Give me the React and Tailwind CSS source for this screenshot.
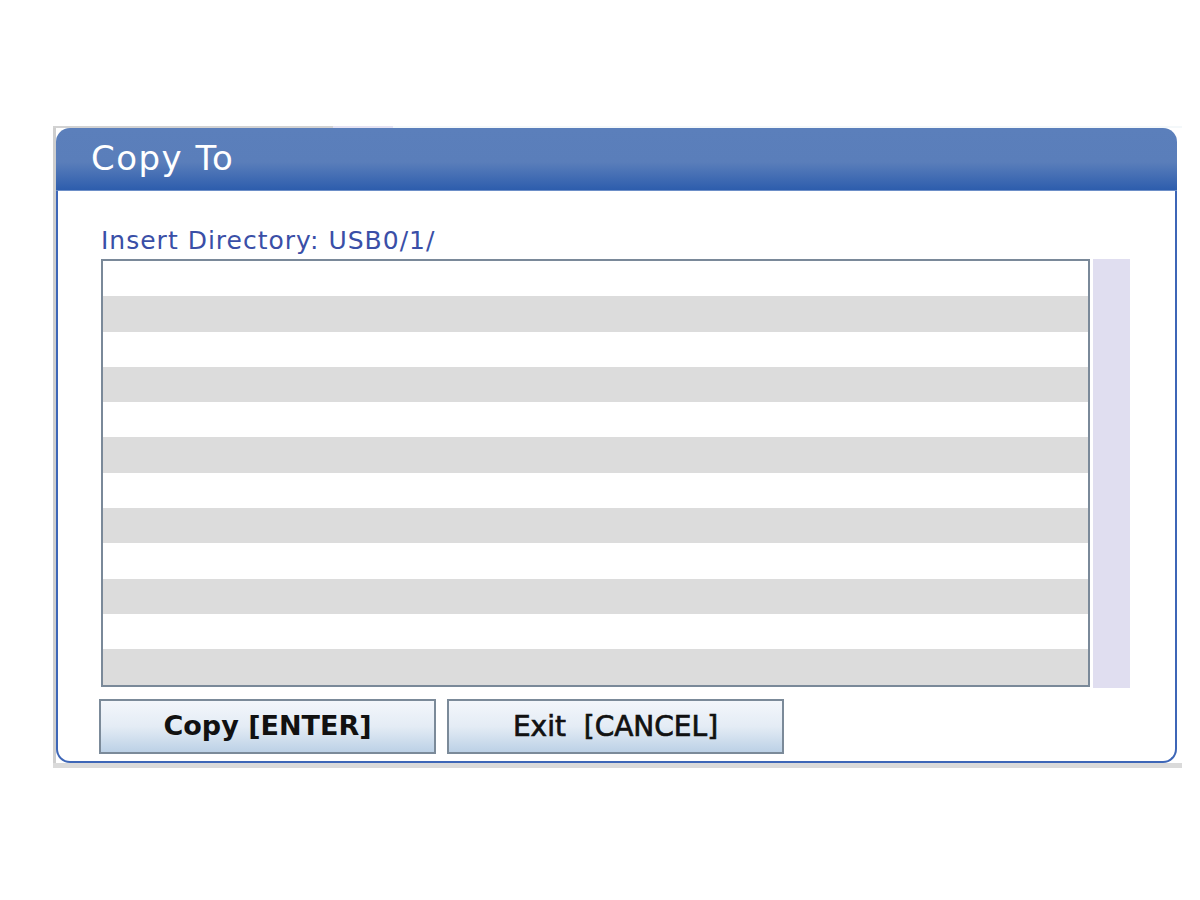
const rows = Array.from({ length: 12 }, (_, i) => i);

function DialogButton({ children }) {
  return (
    <button className="w-[337px] h-[55px] border-2 border-[#7b8a99] bg-gradient-to-b from-[#f3f6fb] via-[#e4ecf5] to-[#bcd1e6] text-[#111] whitespace-pre flex items-center justify-center">
      {children}
    </button>
  );
}

export default function App() {
  return (
    <div className="min-h-[900px] bg-white pt-[126px] pl-[53px]" style={{ fontFamily: '"DejaVu Sans", Verdana, sans-serif' }}>
      <div className="w-[1129px] bg-white">
        {/* edge of the screen behind the dialog */}
        <div className="flex h-[2px]">
          <div className="w-[280px] bg-[#d2d2d2]" />
          <div className="w-[60px] bg-[#e4e2f2]" />
          <div className="flex-1 bg-[#f4f8fa]" />
        </div>
        <div className="border-l-[3px] border-[#cecece]">
          <div className="w-[1121px]">
            {/* title bar */}
            <div className="h-[63px] rounded-t-[14px] bg-gradient-to-b from-[#5b7fbb] via-[#5a7eba] via-55% to-[#2d5dad] border-b border-[#6d8fc8] flex items-center pl-[35px]">
              <span className="text-white text-[34px] tracking-[1.5px] leading-none pb-[2px]">Copy To</span>
            </div>

            {/* body */}
            <div className="h-[572px] bg-white border-x-2 border-b-2 border-[#3d66b7] rounded-b-[14px] pl-[43px] pt-[36px]">
              <div className="text-[25px] tracking-[1px] leading-[28px] text-[#3a4fa7] h-[32px]">Insert Directory: USB0/1/</div>

              <div className="flex gap-[3px]">
                <div className="w-[989px] h-[428px] border-2 border-[#7a8999] flex flex-col">
                  {rows.map((i) => (
                    <div key={i} className={i % 2 === 0 ? "h-[35.3px] bg-white" : "h-[35.3px] bg-[#dcdcdc]"} />
                  ))}
                </div>
                <div className="w-[37px] h-[429px] bg-[#e0def0]" />
              </div>

              <div className="flex gap-[11px] mt-[11px] -ml-[2px]">
                <DialogButton>
                  <span className="text-[27px] font-bold">Copy [ENTER]</span>
                </DialogButton>
                <DialogButton>
                  <span className="text-[28px] [-webkit-text-stroke:0.7px_#111]">Exit  [CANCEL]</span>
                </DialogButton>
              </div>
            </div>
          </div>
        </div>
        <div className="h-[5px] bg-[#dadada]" />
      </div>
    </div>
  );
}
